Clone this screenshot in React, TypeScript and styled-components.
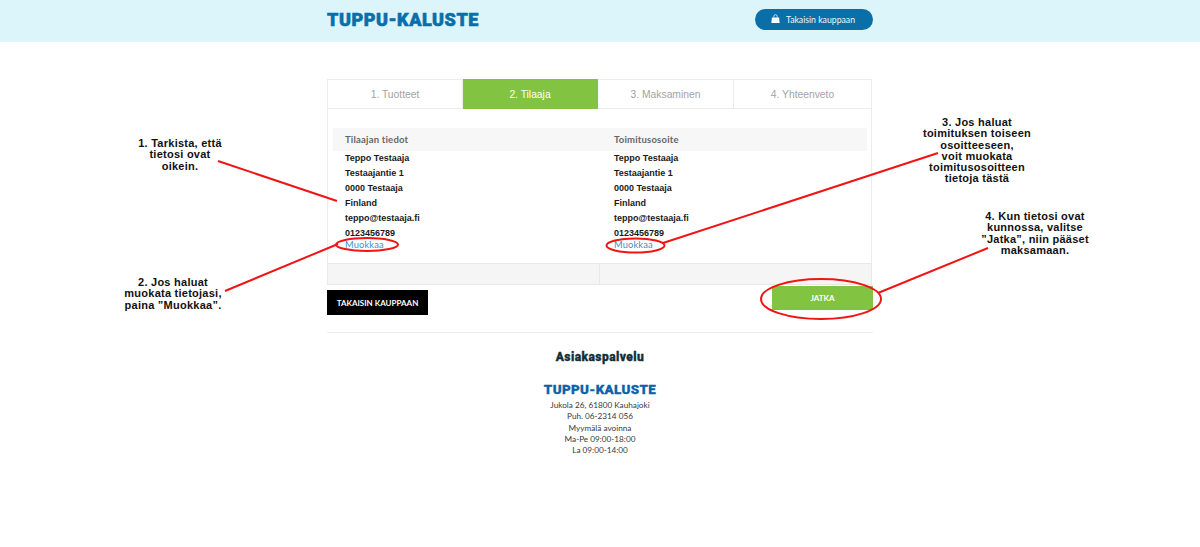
import React from 'react';
import styled, { createGlobalStyle } from 'styled-components';

const GlobalStyle = createGlobalStyle`
  html, body {
    margin: 0;
    padding: 0;
    background: #ffffff;
  }

  * {
    box-sizing: border-box;
  }
`;

const steps = ['1. Tuotteet', '2. Tilaaja', '3. Maksaminen', '4. Yhteenveto'];
const addressRows = ['Teppo Testaaja', 'Testaajantie 1', '0000 Testaaja', 'Finland', 'teppo@testaaja.fi', '0123456789'];
const footerRows = ['Jukola 26, 61800 Kauhajoki', 'Puh. 06-2314 056', 'Myymälä avoinna', 'Ma-Pe 09:00-18:00', 'La 09:00-14:00'];

const notes = [
  { x: 180, y: 138, lines: ['1. Tarkista, että', 'tietosi ovat', 'oikein.'] },
  { x: 173, y: 277, lines: ['2. Jos haluat', 'muokata tietojasi,', 'paina ”Muokkaa”.'] },
  { x: 977, y: 117, lines: ['3. Jos haluat', 'toimituksen toiseen', 'osoitteeseen,', 'voit muokata', 'toimitusosoitteen', 'tietoja tästä'] },
  { x: 1035, y: 211, lines: ['4. Kun tietosi ovat', 'kunnossa, valitse', '”Jatka”, niin pääset', 'maksamaan.'] },
];

export default function App() {
  return (
    <Page>
      <GlobalStyle />
      <Header>
        <HeaderInner>
          <Logo>TUPPU-KALUSTE</Logo>
          <ShopButton>
            <svg width="9" height="10" viewBox="0 0 10 10" fill="#ffffff">
              <path d="M1 3.2h8l.6 6.3H.4z" />
              <path d="M3.2 3.5V2a1.8 1.8 0 0 1 3.6 0v1.5" fill="none" stroke="#ffffff" strokeWidth="0.8" />
            </svg>
            Takaisin kauppaan
          </ShopButton>
        </HeaderInner>
      </Header>

      <Main>
        <Tabs>
          {steps.map((s, i) => (
            <Tab key={s} $active={i === 1}>{s}</Tab>
          ))}
        </Tabs>
        <Panel>
          <Columns>
            <ColumnTitle>Tilaajan tiedot</ColumnTitle>
            <ColumnTitle>Toimitusosoite</ColumnTitle>
          </Columns>
          <Columns>
            <AddressBlock>
              {addressRows.map((r) => <AddressRow key={r}>{r}</AddressRow>)}
              <EditLink>Muokkaa</EditLink>
            </AddressBlock>
            <AddressBlock>
              {addressRows.map((r) => <AddressRow key={r}>{r}</AddressRow>)}
              <EditLink>Muokkaa</EditLink>
            </AddressBlock>
          </Columns>
        </Panel>
        <Strip>
          <StripCell />
          <StripCell />
        </Strip>
        <Actions>
          <BackButton>TAKAISIN KAUPPAAN</BackButton>
          <NextButton>JATKA</NextButton>
        </Actions>
        <Divider />
        <Footer>
          <FooterTitle>Asiakaspalvelu</FooterTitle>
          <FooterLogo>TUPPU-KALUSTE</FooterLogo>
          {footerRows.map((r) => <FooterRow key={r}>{r}</FooterRow>)}
        </Footer>
      </Main>

      <Arrows width="1200" height="547" viewBox="0 0 1200 547" fill="none" stroke="#f01414" strokeWidth="2">
        <path d="M218 161L337 201" />
        <path d="M225 291L338 244" />
        <path d="M663 243L938 153" />
        <path d="M878 293L988 248" />
        <ellipse cx="367" cy="244.5" rx="31" ry="6.5" />
        <ellipse cx="635.5" cy="245.5" rx="29" ry="7" />
        <ellipse cx="821" cy="299" rx="60" ry="20" />
      </Arrows>

      {notes.map((n) => (
        <Note key={n.lines[0]} style={{ left: n.x, top: n.y }}>
          {n.lines.map((l) => <div key={l}>{l}</div>)}
        </Note>
      ))}
    </Page>
  );
}

const Page = styled.div`
  position: relative;
  width: 1200px;
  height: 547px;
  overflow: hidden;
  background: #ffffff;
`;

const Header = styled.header`
  height: 42px;
  background-color: #dcf5fb;
  border-bottom: 1px solid #e8f3f6;
`;

const HeaderInner = styled.div`
  width: 546px;
  height: 100%;
  margin-left: 327px;
  display: flex;
  justify-content: space-between;
  align-items: center;
`;

const Logo = styled.div`
  margin-top: -2px;
  font-family: 'Roboto', sans-serif;
  font-weight: 900;
  font-size: 18px;
  letter-spacing: 0.55px;
  color: #0a6fa8;
  -webkit-text-stroke: 0.6px #0a6fa8;
`;

const ShopButton = styled.div`
  width: 118px;
  height: 21px;
  margin-top: -3px;
  padding-left: 16px;
  display: flex;
  align-items: center;
  gap: 6px;
  border-radius: 11px;
  background-color: #0a6fa8;
  font-family: 'Lato', sans-serif;
  font-size: 8.7px;
  color: #eef8fb;
`;

const Main = styled.main`
  width: 546px;
  margin-left: 327px;
  padding-top: 37px;
`;

const Tabs = styled.div`
  width: 545px;
  height: 30px;
  display: grid;
  grid-template-columns: 135px 135px 136px 137px;
  border: 1px solid #ececec;
`;

const Tab = styled.div<{ $active: boolean }>`
  margin: -1px 0;
  display: flex;
  align-items: center;
  justify-content: center;
  font-family: 'Liberation Sans', sans-serif;
  font-size: 10.3px;
  color: ${(props) => (props.$active ? '#ffffff' : '#a3a3a3')};
  background-color: ${(props) => (props.$active ? '#82c341' : 'transparent')};
  border-right: 1px solid ${(props) => (props.$active ? '#82c341' : '#ececec')};

  &:last-child {
    border-right: none;
  }
`;

const Panel = styled.section`
  width: 545px;
  height: 154px;
  padding: 19px 0 0 5px;
  border-left: 1px solid #ececec;
  border-right: 1px solid #ececec;
`;

const Columns = styled.div`
  display: grid;
  grid-template-columns: 269px 265px;
`;

const ColumnTitle = styled.div`
  height: 23px;
  padding-left: 12px;
  display: flex;
  align-items: center;
  background-color: #f7f7f7;
  font-family: 'Lato', sans-serif;
  font-weight: 700;
  font-size: 9.5px;
  letter-spacing: 0.2px;
  color: #666666;
`;

const AddressBlock = styled.div`
  padding: 0 0 0 12px;
`;

const AddressRow = styled.div`
  height: 15px;
  line-height: 15px;
  font-family: 'Liberation Sans', sans-serif;
  font-weight: 700;
  font-size: 9px;
  color: #1a1a1a;
`;

const EditLink = styled.div`
  height: 12px;
  margin-top: -2px;
  line-height: 12px;
  font-family: 'Lato', sans-serif;
  font-size: 9.3px;
  letter-spacing: 0.15px;
  color: #3d8fbf;
`;

const Strip = styled.div`
  width: 545px;
  height: 22px;
  display: grid;
  grid-template-columns: 272px 1fr;
  border: 1px solid #e8e8e8;
  background-color: #f5f5f5;
`;

const StripCell = styled.div`
  &:first-child {
    border-right: 1px solid #e8e8e8;
  }
`;

const Actions = styled.div`
  height: 47px;
  display: flex;
  justify-content: space-between;
  align-items: flex-start;
`;

const BackButton = styled.div`
  width: 101px;
  height: 25px;
  margin-top: 5px;
  display: flex;
  align-items: center;
  justify-content: center;
  background-color: #000000;
  font-family: 'Lato', sans-serif;
  font-weight: 700;
  font-size: 8px;
  color: #ffffff;
`;

const NextButton = styled.div`
  width: 101px;
  height: 24px;
  margin-top: 1px;
  display: flex;
  align-items: center;
  justify-content: center;
  background-color: #82c341;
  font-family: 'Lato', sans-serif;
  font-weight: 700;
  font-size: 8px;
  color: #ffffff;
`;

const Divider = styled.div`
  height: 1px;
  background-color: #ececec;
`;

const Footer = styled.footer`
  display: flex;
  flex-direction: column;
  align-items: center;
  padding-top: 16px;
`;

const FooterTitle = styled.div`
  height: 16px;
  line-height: 16px;
  font-family: 'Roboto', sans-serif;
  font-weight: 900;
  font-size: 12px;
  letter-spacing: 0.45px;
  color: #10303a;
  -webkit-text-stroke: 0.3px #10303a;
`;

const FooterLogo = styled.div`
  height: 16px;
  margin: 17px 0 2px;
  line-height: 16px;
  font-family: 'Roboto', sans-serif;
  font-weight: 900;
  font-size: 13.4px;
  letter-spacing: 0.35px;
  color: #0a62a8;
  -webkit-text-stroke: 0.3px #0a62a8;
`;

const FooterRow = styled.div`
  height: 11.3px;
  line-height: 11.3px;
  font-family: 'Lato', sans-serif;
  font-size: 8.2px;
  color: #333a40;
`;

const Arrows = styled.svg`
  position: absolute;
  top: 0;
  left: 0;
  pointer-events: none;
`;

const Note = styled.div`
  position: absolute;
  transform: translateX(-50%);
  white-space: nowrap;
  text-align: center;
  font-family: 'Liberation Sans', sans-serif;
  font-weight: 700;
  font-size: 11px;
  letter-spacing: 0.25px;
  line-height: 11.3px;
  color: #111111;
`;
